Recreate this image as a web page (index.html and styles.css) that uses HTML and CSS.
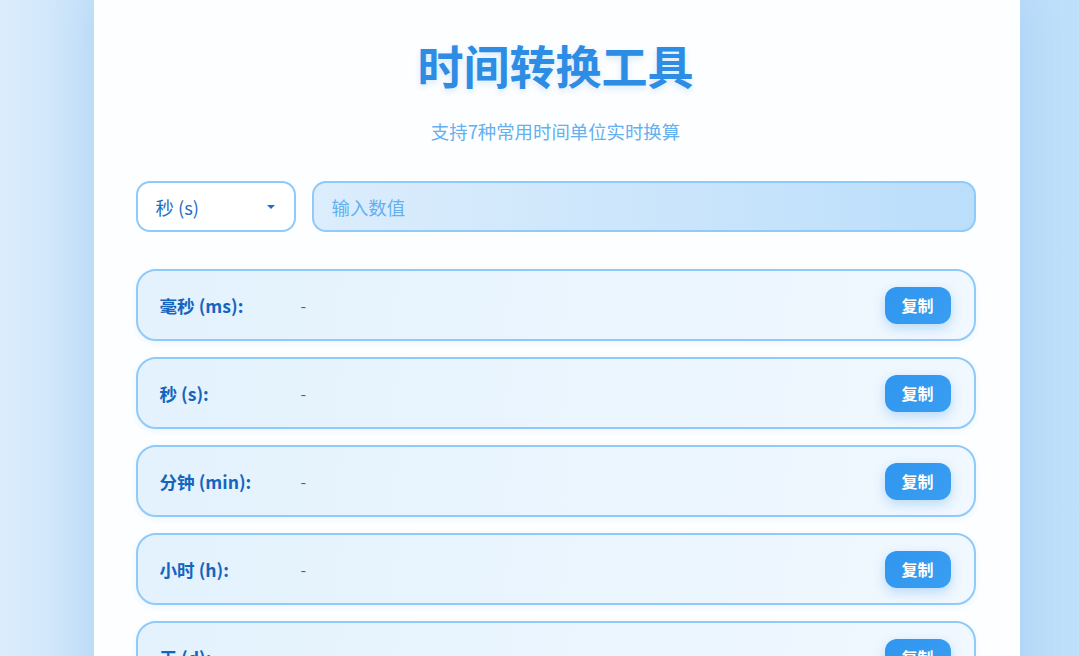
FILE: index.html
```html
<!DOCTYPE html>
<html lang="zh">
<head>
<meta charset="utf-8">
<title>时间转换工具</title>
<link rel="stylesheet" href="styles.css">
</head>
<body>
<main class="container">
  <h1 class="title">时间转换工具</h1>
  <p class="subtitle">支持7种常用时间单位实时换算</p>
  <div class="controls">
    <div class="select">
      <span>秒 (s)</span>
      <span class="arrow"></span>
    </div>
    <input class="input" type="text" placeholder="输入数值">
  </div>
  <div class="rows">
    <div class="row"><span class="label">毫秒 (ms):</span><span class="value">-</span><button class="copy">复制</button></div>
    <div class="row"><span class="label">秒 (s):</span><span class="value">-</span><button class="copy">复制</button></div>
    <div class="row"><span class="label">分钟 (min):</span><span class="value">-</span><button class="copy">复制</button></div>
    <div class="row"><span class="label">小时 (h):</span><span class="value">-</span><button class="copy">复制</button></div>
    <div class="row"><span class="label">天 (d):</span><span class="value">-</span><button class="copy">复制</button></div>
    <div class="row"><span class="label">周 (w):</span><span class="value">-</span><button class="copy">复制</button></div>
    <div class="row"><span class="label">年 (y):</span><span class="value">-</span><button class="copy">复制</button></div>
  </div>
</main>
</body>
</html>
```
FILE: styles.css
```css
* { box-sizing: border-box; }
html, body { margin: 0; padding: 0; }
body {
  font-family: "Noto Sans CJK SC", "Noto Sans", sans-serif;
  background: linear-gradient(90deg, #dcecfc 0%, #c9e3fa 8%, #bcdcf9 92%, #bfe0fa 100%);
  min-height: 100vh;
  padding-left: 34px;
}
.container {
  width: 926px;
  margin: 0 auto;
  background: #fdfeff;
  padding: 33px 44px 40px 42px;
  box-shadow: 0 0 40px rgba(66, 150, 230, 0.18);
}
.title {
  margin: 0;
  text-align: center;
  font-size: 46px;
  line-height: 62px;
  font-weight: 700;
  color: #2d8ce3;
  text-shadow: 0 3px 6px rgba(45, 140, 227, 0.18);
}
.subtitle {
  margin: 23px 0 0;
  text-align: center;
  font-size: 18.4px;
  line-height: 26px;
  color: #64b0f0;
}
.controls {
  display: flex;
  gap: 16px;
  margin-top: 37px;
}
.select {
  width: 160px;
  height: 51px;
  border: 2px solid #90caf9;
  border-radius: 14px;
  background: #ffffff;
  display: flex;
  align-items: center;
  justify-content: space-between;
  padding: 0 19px 0 18px;
  font-size: 18.4px;
  color: #1e6fc4;
}
.arrow {
  width: 0;
  height: 0;
  border-left: 4px solid transparent;
  border-right: 4px solid transparent;
  border-top: 4px solid #1e6fc4;
}
.input {
  flex: 1;
  height: 51px;
  border: 2px solid #90caf9;
  border-radius: 14px;
  background: linear-gradient(90deg, #dcedfc 0%, #bbdefb 100%);
  padding: 0 18px;
  font-family: inherit;
  font-size: 18.4px;
  color: #1565c0;
  outline: none;
}
.input::placeholder { color: #64b0f0; }
.rows {
  display: flex;
  flex-direction: column;
  gap: 16px;
  margin-top: 37px;
}
.row {
  height: 72px;
  border: 2px solid #90caf9;
  border-radius: 20px;
  background: linear-gradient(100deg, #e3f2fd 0%, #f1f8ff 100%);
  display: flex;
  align-items: center;
  padding: 0 23px 0 22px;
  box-shadow: 0 2px 6px rgba(144, 202, 249, 0.15);
}
.label {
  width: 141px;
  font-size: 17.6px;
  font-weight: 700;
  color: #1565c0;
}
.value {
  flex: 1;
  font-size: 16px;
  color: #1e6fc4;
}
.copy {
  width: 66px;
  height: 37px;
  border: none;
  border-radius: 12px;
  background: linear-gradient(135deg, #2f95ef 0%, #3a9ff2 100%);
  color: #ffffff;
  font-family: inherit;
  font-size: 16px;
  font-weight: 700;
  box-shadow: 0 4px 12px rgba(47, 149, 239, 0.3);
  padding: 0;
}
```
